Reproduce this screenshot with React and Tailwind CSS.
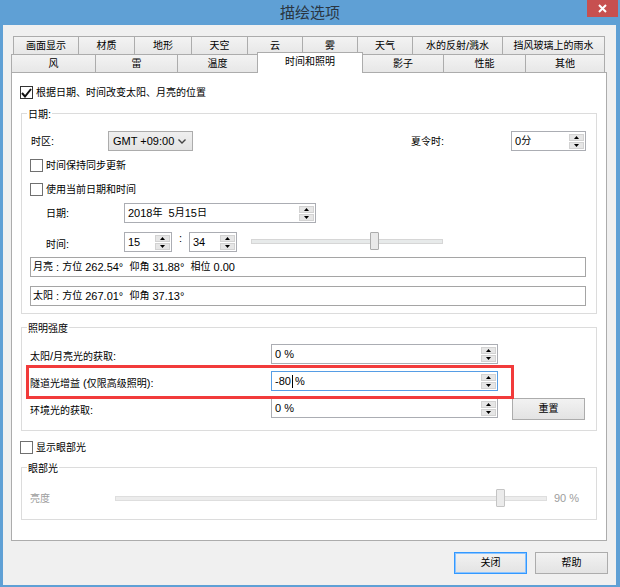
import React from "react";

const FONT = "font-[family-name:'Liberation_Sans','Noto_Sans_CJK_SC',sans-serif]";

function T({ children }) {
  const parts = String(children).split(/([\u3000-\u303f\u4e00-\u9fff\uff00-\uffef]+)/);
  return parts.map((p, i) =>
    i % 2 === 1 ? (
      <span key={i} className="text-[10px]">
        {p}
      </span>
    ) : (
      p
    )
  );
}

const rowOneTabs = [
  ["画面显示", "w-[65px]"],
  ["材质", "w-[56px]"],
  ["地形", "w-[57px]"],
  ["天空", "w-[56px]"],
  ["云", "w-[55px]"],
  ["雾", "w-[55px]"],
  ["天气", "w-[55px]"],
  ["水的反射/溅水", "w-[90px]"],
  ["挡风玻璃上的雨水", "w-[103px]"],
];

const rowTwoTabs = [
  ["风", "w-[84px]"],
  ["雷", "w-[82px]"],
  ["温度", "w-[80px]"],
  ["时间和照明", "w-[106px]", true],
  ["影子", "w-[80px]"],
  ["性能", "w-[82px]"],
  ["其他", "w-[80px]"],
];

function Tri({ down }) {
  return (
    <svg width="5" height="3" viewBox="0 0 5 3">
      <polygon points={down ? "0,0 5,0 2.5,3" : "0,3 2.5,0 5,3"} fill="#000" />
    </svg>
  );
}

function Spinner() {
  return (
    <div className="flex w-[15px] flex-col gap-px">
      <div className="flex h-[7px] items-center justify-center border border-[#d2d2d2] bg-[#e6e6e6]">
        <Tri />
      </div>
      <div className="flex h-[7px] items-center justify-center border border-[#d2d2d2] bg-[#e6e6e6]">
        <Tri down />
      </div>
    </div>
  );
}

function SpinBox({ className, focused, children }) {
  return (
    <div
      className={`flex h-[20px] items-center border bg-white pl-[3px] pr-[1px] ${
        focused ? "border-[#569de5]" : "border-[#abadb3]"
      } ${className}`}
    >
      <span className="flex flex-1 items-center whitespace-pre">{children}</span>
      <Spinner />
    </div>
  );
}

function Checkbox({ checked }) {
  return (
    <div
      className={`flex h-[13px] w-[13px] shrink-0 items-center justify-center border bg-white ${
        checked ? "border-[#333]" : "border-[#707070]"
      }`}
    >
      {checked && (
        <svg width="11" height="10" viewBox="0 0 11 10">
          <polyline points="1,5 4,8.5 10,1" fill="none" stroke="#111" strokeWidth="2" />
        </svg>
      )}
    </div>
  );
}

function CheckRow({ checked, label, className }) {
  return (
    <div className={`flex h-[13px] items-center gap-[3px] ${className}`}>
      <Checkbox checked={checked} />
      <span>
        <T>{label}</T>
      </span>
    </div>
  );
}

function Group({ label, className, children }) {
  return (
    <div className={`relative border border-[#dcdcdc] ${className}`}>
      <span className="absolute left-[5px] top-[-7px] bg-white px-px leading-[14px]">
        <T>{label}</T>
      </span>
      {children}
    </div>
  );
}

function Slider({ className, thumb, disabled }) {
  return (
    <div className={`relative flex h-[18px] items-center ${className}`}>
      <div
        className={`h-[5px] w-full border ${
          disabled ? "border-[#dedede] bg-[#ececec]" : "border-[#d6d6d6] bg-[#e7eaea]"
        }`}
      />
      <div
        className={`absolute top-0 h-[18px] w-[9px] rounded-[1px] border ${
          disabled ? "border-[#c4c4c4] bg-[#ebebeb]" : "border-[#acacac] bg-[#e9e9e9]"
        } ${thumb}`}
      />
    </div>
  );
}

function Button({ children, primary }) {
  return (
    <div
      className={`flex h-[22px] w-[73px] items-center justify-center border bg-gradient-to-b from-[#f2f2f2] to-[#e3e3e3] ${
        primary ? "border-[#3399ff] shadow-[inset_0_0_0_1px_#8cc4ff]" : "border-[#acacac]"
      }`}
    >
      <T>{children}</T>
    </div>
  );
}

export default function App() {
  return (
    <div className={`flex h-[587px] w-[620px] flex-col overflow-hidden bg-[#5fa0d5] text-[11px] leading-[14px] text-black ${FONT}`}>
      {/* title bar */}
      <div className="relative flex h-[25px] shrink-0 items-center justify-center">
        <span className="text-[15px] leading-[18px] text-[#2a3642]">描绘选项</span>
        <div className="absolute right-[2px] top-0 flex h-[17px] w-[31px] items-center justify-center bg-[#c75050]">
          <svg width="9" height="9" viewBox="0 0 9 9">
            <path d="M1 1 L8 8 M8 1 L1 8" stroke="#fff" strokeWidth="2" />
          </svg>
        </div>
      </div>

      {/* dialog body */}
      <div className="mb-[2px] ml-[3px] mr-[4px] flex flex-1 flex-col bg-[#f0f0f0]">
        <div className="pt-[11px]">
          <div className="ml-[10px] flex h-[18px]">
            {rowOneTabs.map(([t, w], i) => (
              <div
                key={t}
                className={`flex items-center justify-center border-l border-t border-[#acacac] bg-gradient-to-b from-[#f3f3f3] to-[#e7e7e7] ${w} ${
                  i === rowOneTabs.length - 1 ? "border-r" : ""
                }`}
              >
                <T>{t}</T>
              </div>
            ))}
          </div>
          <div className="ml-[8px] flex h-[18px] items-end">
            {rowTwoTabs.map(([t, w, active], i) =>
              active ? (
                <div
                  key={t}
                  className={`relative z-10 -mb-px flex h-[21px] items-center justify-center border-l border-r border-t border-[#acacac] bg-white pb-[2px] ${w}`}
                >
                  <T>{t}</T>
                </div>
              ) : (
                <div
                  key={t}
                  className={`flex h-[18px] items-center justify-center border-l border-t border-[#acacac] bg-gradient-to-b from-[#f3f3f3] to-[#e7e7e7] ${w} ${
                    i === rowTwoTabs.length - 1 ? "border-r" : ""
                  } ${i === 4 ? "border-l-0" : ""}`}
                >
                  <T>{t}</T>
                </div>
              )
            )}
          </div>
        </div>

        {/* tab panel */}
        <div className="ml-[8px] h-[469px] w-[596px] border border-[#acacac] bg-white">
          <CheckRow checked label="根据日期、时间改变太阳、月亮的位置" className="ml-[8px] mt-[13px]" />

          <Group label="日期:" className="ml-[9px] mt-[14px] w-[576px] pb-[7px] pt-[17px]">
            <div className="flex h-[20px] items-center pl-[9px]">
              <span className="w-[77px]">
                <T>时区:</T>
              </span>
              <div className="flex h-[20px] w-[85px] items-center justify-between whitespace-nowrap border border-[#acacac] bg-gradient-to-b from-[#efefef] to-[#e3e3e3] pl-[4px] pr-[6px]">
                <span>GMT +09:00</span>
                <svg width="8" height="5" viewBox="0 0 8 5">
                  <polyline points="0.5,0.5 4,4 7.5,0.5" fill="none" stroke="#444" strokeWidth="1.4" />
                </svg>
              </div>
              <span className="ml-[218px] w-[100px]">
                <T>夏令时:</T>
              </span>
              <SpinBox className="w-[75px]">
                <T>0分</T>
              </SpinBox>
            </div>

            <CheckRow label="时间保持同步更新" className="ml-[8px] mt-[8px]" />
            <CheckRow label="使用当前日期和时间" className="ml-[8px] mt-[11px]" />

            <div className="mt-[7px] flex h-[20px] items-center pl-[24px]">
              <span className="w-[78px]">
                <T>日期:</T>
              </span>
              <SpinBox className="w-[192px]">
                <T>{"2018年  5月15日"}</T>
              </SpinBox>
            </div>

            <div className="mt-[9px] flex h-[20px] items-center pl-[24px]">
              <span className="w-[78px] translate-y-[2px]">
                <T>时间:</T>
              </span>
              <SpinBox className="w-[48px]">15</SpinBox>
              <span className="w-[17px] -translate-y-[4px] text-center">:</span>
              <SpinBox className="w-[48px]">34</SpinBox>
              <Slider className="ml-[14px] w-[192px] self-start" thumb="left-[119px]" />
            </div>

            <div className="ml-[8px] mt-[5px] flex h-[20px] w-[556px] items-center whitespace-pre border border-[#a5a5a5] pl-[2px]">
              <T>{"月亮 : 方位 262.54°  仰角 31.88°  相位 0.00"}</T>
            </div>
            <div className="ml-[8px] mt-[9px] flex h-[20px] w-[556px] items-center whitespace-pre border border-[#a5a5a5] pl-[2px]">
              <T>{"太阳 : 方位 267.01°  仰角 37.13°"}</T>
            </div>
          </Group>

          <Group label="照明强度" className="ml-[9px] mt-[13px] w-[576px] pb-[10px] pt-[16px]">
            <div className="flex h-[20px] items-center pl-[8px]">
              <span className="w-[241px] translate-y-[2px]">
                <T>太阳/月亮光的获取:</T>
              </span>
              <SpinBox className="w-[227px]">0 %</SpinBox>
            </div>
            <div className="relative mt-[7px] flex h-[20px] items-center pl-[8px]">
              <span className="w-[241px] translate-y-[2px]">
                <T>隧道光增益 (仅限高级照明):</T>
              </span>
              <SpinBox className="w-[227px]" focused>
                -80<span className="ml-px mr-[2px] inline-block h-[13px] w-px bg-black" />%
              </SpinBox>
              <div className="pointer-events-none absolute left-[4px] top-[-6px] h-[34px] w-[488px] border-[3px] border-[#f23b3b]" />
            </div>
            <div className="mt-[7px] flex h-[22px] items-start pl-[8px]">
              <span className="mt-[5px] w-[241px]">
                <T>环境光的获取:</T>
              </span>
              <SpinBox className="w-[227px]">0 %</SpinBox>
              <div className="ml-[14px]">
                <Button>重置</Button>
              </div>
            </div>
          </Group>

          <CheckRow label="显示眼部光" className="ml-[8px] mt-[10px]" />

          <Group label="眼部光" className="ml-[9px] mt-[13px] w-[576px] pb-[12px] pt-[21px]">
            <div className="flex h-[18px] items-center pl-[8px] text-[#9d9d9d]">
              <span className="w-[85px]">
                <T>亮度</T>
              </span>
              <Slider className="w-[432px]" thumb="left-[381px]" disabled />
              <span className="ml-[7px]">90 %</span>
            </div>
          </Group>
        </div>

        <div className="mt-[11px] flex justify-end gap-[8px] pr-[8px]">
          <Button primary>关闭</Button>
          <Button>帮助</Button>
        </div>
      </div>
    </div>
  );
}
